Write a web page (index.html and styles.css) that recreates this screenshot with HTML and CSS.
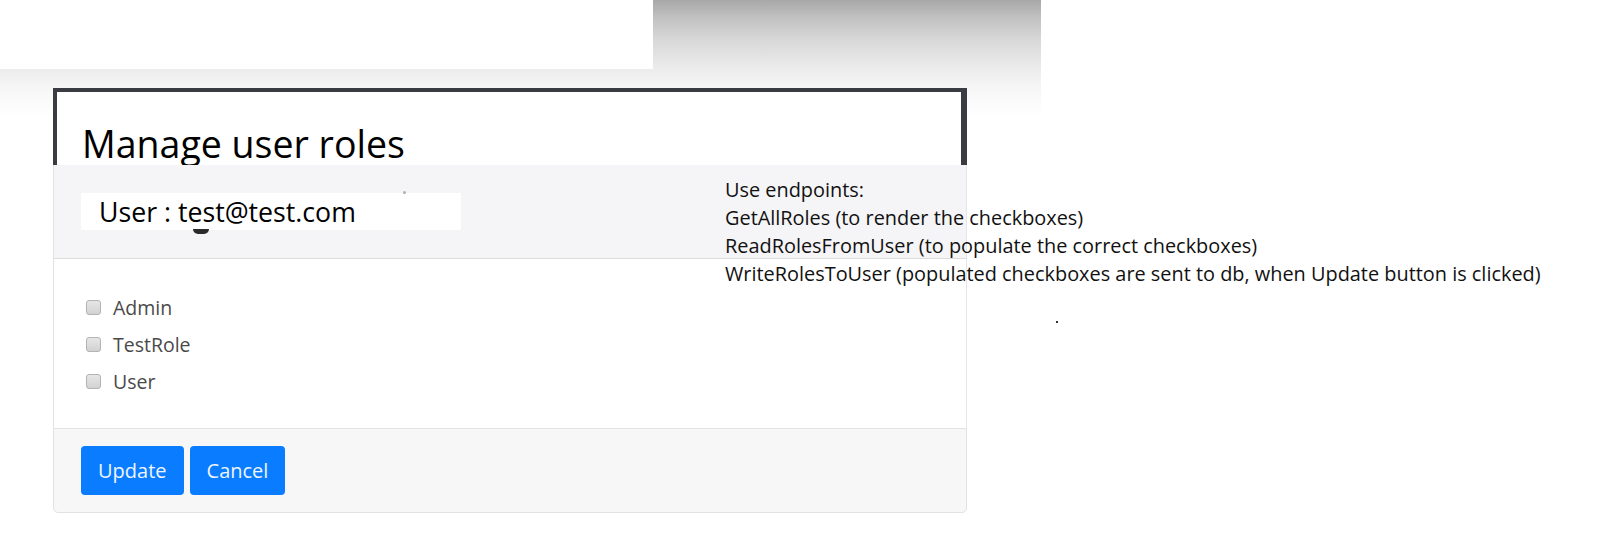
FILE: index.html
```html
<!DOCTYPE html>
<html lang="en">
<head>
<meta charset="utf-8">
<title>Manage user roles</title>
<link rel="stylesheet" href="styles.css">
</head>
<body>
<div class="page">
  <div class="top-block"></div>
  <div class="card">
    <div class="frame">
      <h1 class="title">Manage user roles</h1>
    </div>
    <div class="card-header">
      <div class="user-box">User : test@test.com</div>
      <span class="smudge"></span>
      <span class="speck"></span>
    </div>
    <div class="card-body">
      <label class="role"><span class="check"></span><span class="role-name">Admin</span></label>
      <label class="role"><span class="check"></span><span class="role-name">TestRole</span></label>
      <label class="role"><span class="check"></span><span class="role-name">User</span></label>
    </div>
    <div class="card-footer">
      <button class="btn">Update</button>
      <button class="btn">Cancel</button>
    </div>
  </div>
  <div class="notes">
    <p>Use endpoints:</p>
    <p>GetAllRoles (to render the checkboxes)</p>
    <p>ReadRolesFromUser (to populate the correct checkboxes)</p>
    <p>WriteRolesToUser (populated checkboxes are sent to db, when Update button is clicked)</p>
  </div>
  <span class="dot"></span>
</div>
</body>
</html>
```

FILE: styles.css
```css
* { box-sizing: border-box; }

html, body {
  margin: 0;
  padding: 0;
  background: #ffffff;
}

.page {
  position: relative;
  width: 1610px;
  height: 560px;
  overflow: hidden;
  font-family: "Open Sans", "Noto Sans", sans-serif;
  background-image: linear-gradient(#a8a8a8 0px, #c4c4c4 20px, #d8d8d8 40px, #ececec 69px, #f6f6f6 88px, #fcfcfc 105px, #ffffff 118px);
  background-repeat: no-repeat;
  background-size: 1041px 118px;
}

.top-block {
  width: 653px;
  height: 69px;
  background: #ffffff;
}

.card {
  margin: 19px 0 0 53px;
  width: 914px;
}

.frame {
  height: 77px;
  overflow: hidden;
  background: #ffffff;
  border-top: 4px solid #3b3c41;
  border-left: 4px solid #3b3c41;
  border-right: 6px solid #3b3c41;
  padding: 29px 0 0 25px;
}

.title {
  margin: 0;
  font-family: "Open Sans", sans-serif;
  font-weight: 400;
  font-size: 37.5px;
  line-height: 46px;
  color: #000000;
}

.card-header {
  position: relative;
  height: 94px;
  background: #f5f4f7;
  border-left: 1px solid #e2e2e4;
  border-right: 1px solid #e6e6e8;
  border-bottom: 1px solid #dcdcdc;
  padding: 28px 0 0 27px;
}

.user-box {
  width: 380px;
  height: 37px;
  background: #ffffff;
  padding: 1px 0 0 18px;
  font-size: 26.7px;
  line-height: 36px;
  color: #000000;
  white-space: nowrap;
}

.smudge {
  position: absolute;
  left: 139px;
  top: 64px;
  width: 16px;
  height: 5px;
  border-radius: 0 0 8px 8px;
  background: #2a2a2a;
}

.speck {
  position: absolute;
  left: 349px;
  top: 26px;
  width: 3px;
  height: 3px;
  border-radius: 50%;
  background: #b0b0b0;
}

.card-body {
  background: #ffffff;
  border-left: 1px solid #e2e2e4;
  border-right: 1px solid #e6e6e8;
  padding: 30px 0 28px 32px;
  display: flex;
  flex-direction: column;
}

.role {
  display: flex;
  align-items: center;
  height: 37px;
  gap: 12px;
}

.check {
  width: 15px;
  height: 15px;
  border: 1px solid #b3b3b3;
  border-radius: 3px;
  background: linear-gradient(#e6e6e6, #d2d2d2);
}

.role-name {
  font-size: 19.5px;
  line-height: 26px;
  color: #4a4a4a;
}

.card-footer {
  height: 85px;
  background: #f7f7f8;
  border: 1px solid #e2e2e4;
  border-radius: 0 0 5px 5px;
  padding: 17px 0 0 27px;
  display: flex;
  align-items: flex-start;
  gap: 6px;
}

.btn {
  height: 49px;
  padding: 0 17px;
  border: 0;
  border-radius: 4px;
  background: #0a7cff;
  color: #eef5ff;
  font-family: "Open Sans", sans-serif;
  font-size: 20px;
  line-height: 49px;
}

.notes {
  position: absolute;
  left: 725px;
  top: 176px;
  font-family: "Open Sans", Lato, sans-serif;
  font-size: 19.9px;
  line-height: 28px;
  color: #111111;
  white-space: nowrap;
}

.notes p {
  margin: 0;
}

.dot {
  position: absolute;
  left: 1056px;
  top: 321px;
  width: 2px;
  height: 2px;
  background: #333333;
}
```
